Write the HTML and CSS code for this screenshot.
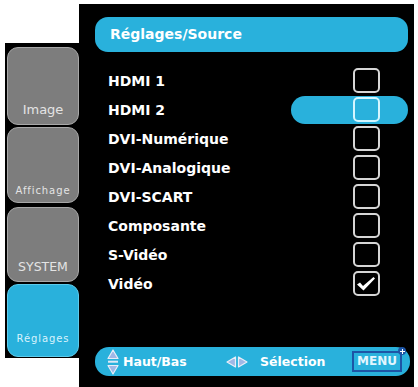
FILE: index.html
```html
<!DOCTYPE html>
<html lang="fr">
<head>
<meta charset="utf-8">
<title>Réglages/Source</title>
<link rel="stylesheet" href="styles.css">
</head>
<body>
<div class="screen">
  <nav class="sidebar">
    <div class="tab tab--image"><span class="tab-label">Image</span></div>
    <div class="tab tab--display"><span class="tab-label tab-label--small">Affichage</span></div>
    <div class="tab tab--system"><span class="tab-label tab-label--system">SYSTEM</span></div>
    <div class="tab tab--active"><span class="tab-label tab-label--small">Réglages</span></div>
  </nav>
  <main class="panel">
    <div class="title">Réglages/Source</div>
    <ul class="list">
      <li class="row"><span class="label">HDMI 1</span><span class="cell"><span class="box"></span></span></li>
      <li class="row row--selected"><span class="label">HDMI 2</span><span class="cell"><span class="box"></span></span></li>
      <li class="row"><span class="label">DVI-Numérique</span><span class="cell"><span class="box"></span></span></li>
      <li class="row"><span class="label">DVI-Analogique</span><span class="cell"><span class="box"></span></span></li>
      <li class="row"><span class="label">DVI-SCART</span><span class="cell"><span class="box"></span></span></li>
      <li class="row"><span class="label">Composante</span><span class="cell"><span class="box"></span></span></li>
      <li class="row"><span class="label">S-Vidéo</span><span class="cell"><span class="box"></span></span></li>
      <li class="row"><span class="label">Vidéo</span><span class="cell"><span class="box box--checked"><svg class="check" viewBox="0 0 23 21" width="23" height="21"><path d="M2 11.5 L5 9.5 L8 13 L18.5 4 L20 5.5 L8.5 17.5 Z" fill="#ffffff"/></svg></span></span></li>
    </ul>
    <div class="footer">
      <div class="hint hint--updown">
        <svg class="icon-updown" viewBox="0 0 12 26" width="12" height="26">
          <path d="M6 1 L11 9.5 L1 9.5 Z" fill="#9fb8e6" stroke="#e8eef8" stroke-width="1.2" stroke-linejoin="round"/>
          <rect x="1" y="11.7" width="10" height="2" fill="#dfe8f6"/>
          <path d="M6 25 L11 16.5 L1 16.5 Z" fill="#9fb8e6" stroke="#e8eef8" stroke-width="1.2" stroke-linejoin="round"/>
        </svg>
        <span class="hint-text">Haut/Bas</span>
      </div>
      <div class="hint hint--leftright">
        <svg class="icon-leftright" viewBox="0 0 22 12" width="22" height="12">
          <path d="M1 6 L9.5 1 L9.5 11 Z" fill="#9fb8e6" stroke="#e8eef8" stroke-width="1.2" stroke-linejoin="round"/>
          <path d="M21 6 L12.5 1 L12.5 11 Z" fill="#9fb8e6" stroke="#e8eef8" stroke-width="1.2" stroke-linejoin="round"/>
        </svg>
        <span class="hint-text">Sélection</span>
      </div>
      <div class="menu-key">MENU<span class="menu-plus"></span></div>
    </div>
  </main>
</div>
</body>
</html>
```

FILE: styles.css
```css
* { box-sizing: border-box; }

html, body {
  margin: 0;
  padding: 0;
  background: #ffffff;
}

body {
  font-family: "DejaVu Sans", Verdana, sans-serif;
  width: 418px;
  height: 387px;
  overflow: hidden;
}

.screen {
  display: flex;
  align-items: flex-start;
  padding: 4px 0 0 5px;
}

/* Sidebar */
.sidebar {
  margin-top: 39px;
  width: 74px;
  height: 315px;
  background: #000000;
  padding: 4px 0 0 2px;
  display: flex;
  flex-direction: column;
}

.tab {
  width: 72px;
  border-radius: 11px;
  background: #7d7d7d;
  border: 1px solid #a8a8a8;
  display: flex;
  align-items: flex-end;
  justify-content: center;
}

.tab--image { height: 78px; padding-bottom: 8px; }
.tab--display { height: 76px; margin-top: 2px; padding-bottom: 6px; }
.tab--system { height: 75px; margin-top: 4px; padding-bottom: 8px; }
.tab--active {
  height: 73px;
  margin-top: 2px;
  padding-bottom: 12px;
  background: #29b1dc;
  border-color: #5ccbec;
}

.tab-label {
  color: #e4e4e4;
  font-size: 13px;
  line-height: 1;
}

.tab-label--small {
  font-size: 10px;
  letter-spacing: 0.9px;
}

.tab-label--system {
  font-size: 12.5px;
}

.tab--active .tab-label { color: #d8f3fc; }

/* Main panel */
.panel {
  width: 335px;
  height: 383px;
  background: #000000;
  padding: 13px 0 0 16px;
}

.title {
  width: 313px;
  height: 35px;
  border-radius: 13px;
  background: #29b1dc;
  color: #ffffff;
  font-weight: bold;
  font-size: 14px;
  line-height: 35px;
  padding-left: 15px;
}

.list {
  list-style: none;
  margin: 14px 0 0 0;
  padding: 0;
  width: 313px;
}

.row {
  height: 29px;
  display: flex;
  align-items: center;
}

.label {
  flex: 1;
  padding-left: 13px;
  color: #ffffff;
  font-weight: bold;
  font-size: 14px;
}

.cell {
  width: 117px;
  height: 28px;
  border-radius: 14px;
  padding-left: 62px;
  display: flex;
  align-items: center;
}

.row--selected .cell { background: #29b1dc; }

.box {
  width: 27px;
  height: 25px;
  border: 2px solid #d6d6d6;
  border-radius: 5px;
  display: flex;
  align-items: center;
  justify-content: center;
}

.row--selected .box { border-color: #d4f6ff; }

.check { display: block; }

/* Footer */
.footer {
  margin-top: 49px;
  width: 315px;
  height: 29px;
  border-radius: 14px;
  background: #29b1dc;
  display: flex;
  align-items: center;
  padding-left: 12px;
}

.hint {
  display: flex;
  align-items: center;
}

.hint--updown { width: 119px; gap: 4px; }
.hint--leftright { width: 126px; gap: 12px; }

.icon-updown, .icon-leftright { display: block; flex: none; }

.hint-text {
  color: #ffffff;
  font-weight: bold;
  font-size: 12.5px;
}

.menu-key {
  position: relative;
  width: 50px;
  height: 21px;
  border: 2px solid #1d55a6;
  color: #e2f6ff;
  font-weight: bold;
  font-size: 12px;
  line-height: 17px;
  text-align: center;
}

.menu-plus {
  position: absolute;
  top: -6px;
  right: -6px;
  width: 8px;
  height: 8px;
  border-radius: 50%;
  background: #1d55a6;
}

.menu-plus::before,
.menu-plus::after {
  content: "";
  position: absolute;
  background: #ffffff;
}

.menu-plus::before { left: 1.5px; top: 3.5px; width: 5px; height: 1px; }
.menu-plus::after { left: 3.5px; top: 1.5px; width: 1px; height: 5px; }
```
